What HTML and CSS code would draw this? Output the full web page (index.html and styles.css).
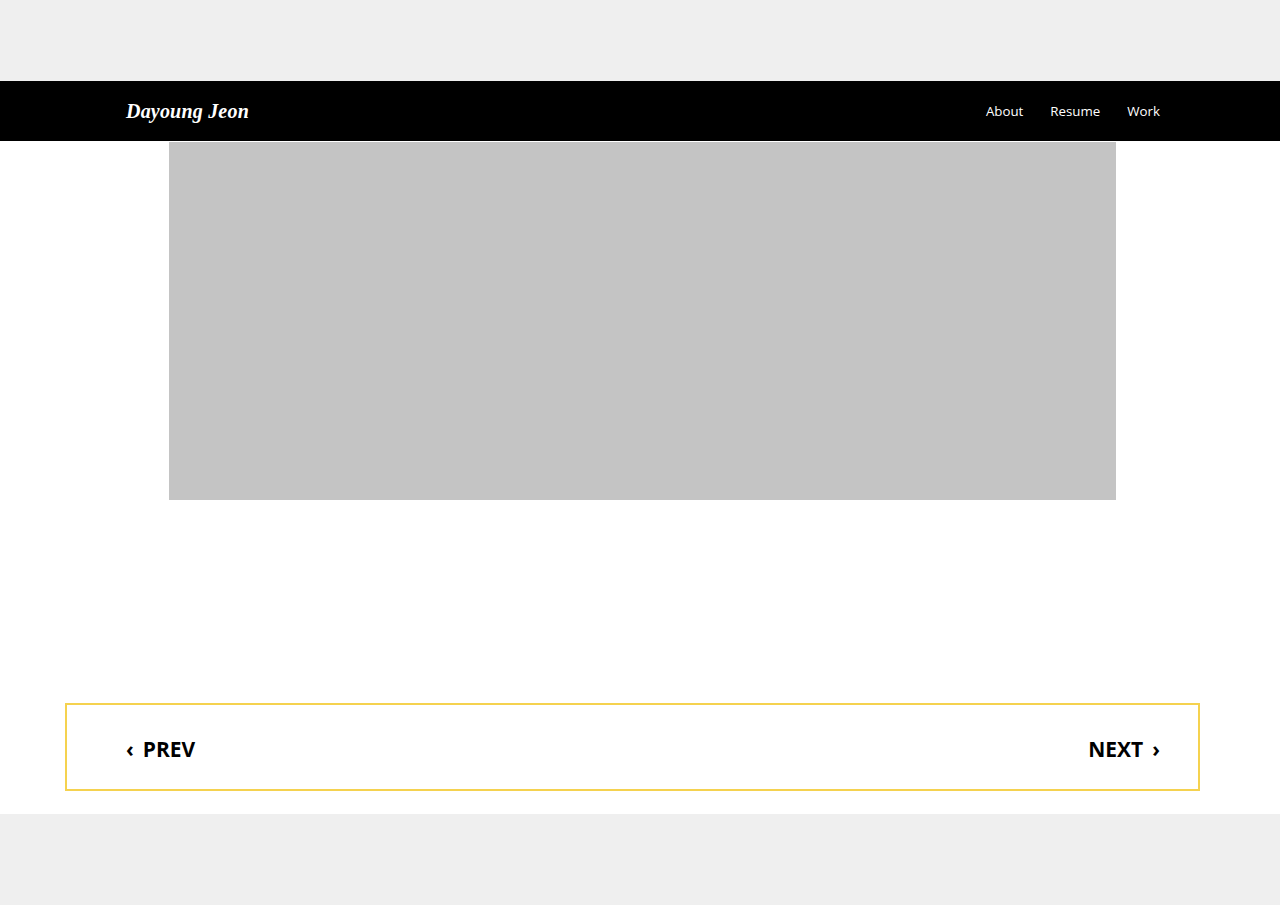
FILE: index.html
```html
<!DOCTYPE html>
<html lang="en">
<head>
<meta charset="utf-8">
<title>Dayoung Jeon</title>
<link rel="stylesheet" href="styles.css">
</head>
<body>
<div class="top-space"></div>
<header class="site-header">
  <div class="header-inner">
    <a class="logo" href="#">Dayoung Jeon</a>
    <nav class="main-nav">
      <a href="#">About</a>
      <a href="#">Resume</a>
      <a href="#">Work</a>
    </nav>
  </div>
</header>
<main class="page">
  <div class="hero-image"></div>
  <div class="pager">
    <a class="pager-link" href="#"><span class="chev">‹</span>PREV</a>
    <a class="pager-link" href="#">NEXT<span class="chev chev-right">›</span></a>
  </div>
</main>
</body>
</html>
```
FILE: styles.css
```css
html, body {
  margin: 0;
  padding: 0;
}
body {
  background: #efefef;
  font-family: "Open Sans", "Liberation Sans", sans-serif;
}
a {
  text-decoration: none;
  color: inherit;
}
.top-space {
  height: 81px;
}
.site-header {
  background: #000;
  height: 60px;
}
.header-inner {
  height: 100%;
  margin: 0 120px 0 126px;
  display: flex;
  align-items: center;
  justify-content: space-between;
}
.logo {
  font-family: "Liberation Serif", "DejaVu Serif", serif;
  font-weight: bold;
  font-style: italic;
  font-size: 20px;
  color: #fff;
  letter-spacing: 0.2px;
}
.main-nav {
  display: flex;
  gap: 27px;
  font-size: 13.3px;
  color: #fff;
  padding-bottom: 1px;
}
.page {
  background: #fff;
  height: 673px;
  display: flex;
  flex-direction: column;
  align-items: flex-start;
}
.hero-image {
  margin: 1px 0 0 169px;
  width: 947px;
  height: 358px;
  background: #c4c4c4;
}
.pager {
  margin: 203px 0 0 65px;
  width: 1135px;
  height: 88px;
  box-sizing: border-box;
  border: 2px solid #f5d24f;
  padding: 3px 38px 0 59px;
  display: flex;
  align-items: center;
  justify-content: space-between;
  font-weight: bold;
  font-size: 21px;
  color: #000;
}
.pager-link {
  display: flex;
  align-items: center;
}
.chev {
  margin-right: 9px;
}
.chev-right {
  margin-right: 0;
  margin-left: 9px;
}
```
